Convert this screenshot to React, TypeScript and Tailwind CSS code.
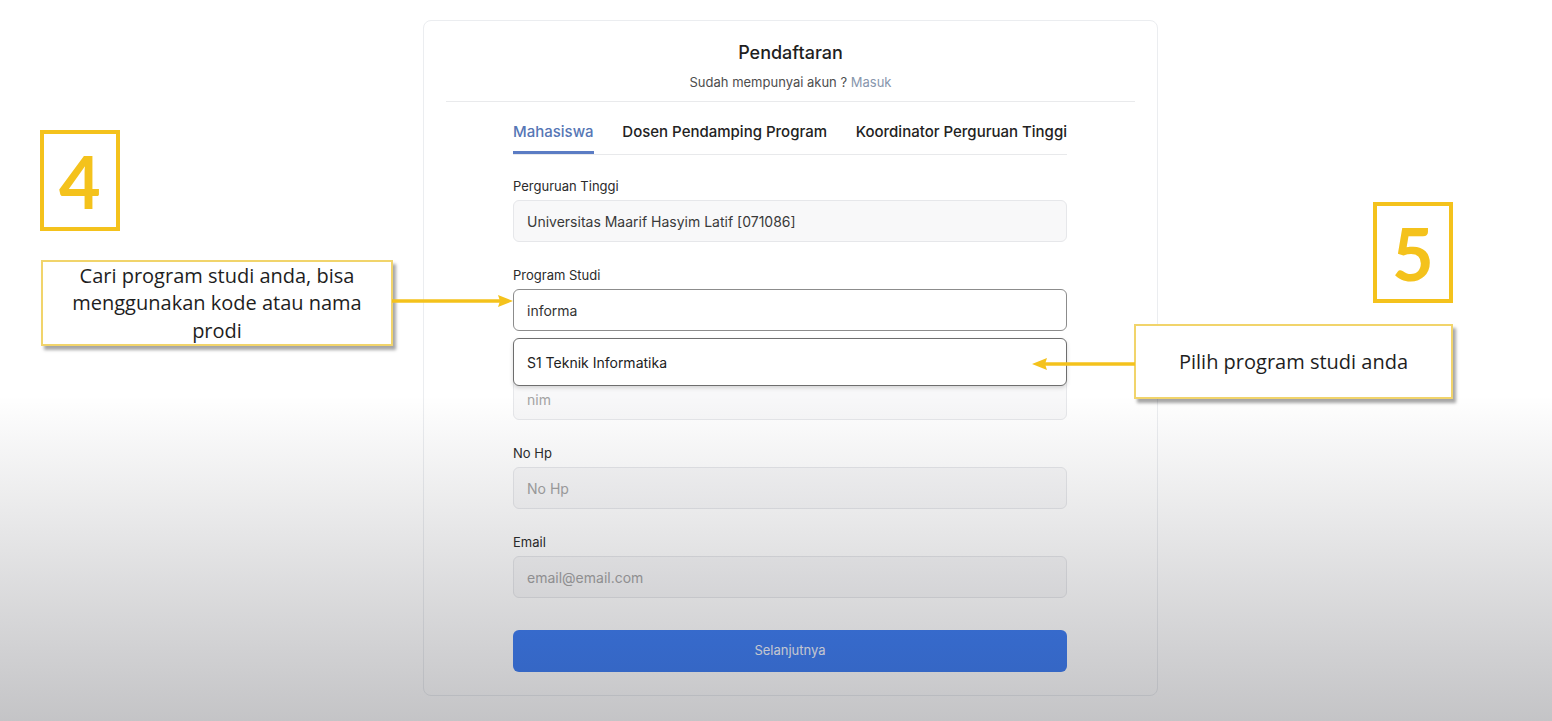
const font = { fontFamily: "Inter, 'Noto Sans', sans-serif" }
const callFont = { fontFamily: "'Open Sans', Lato, sans-serif" }
const digitFont = { fontFamily: "Lato, 'Open Sans', sans-serif" }

interface FieldProps {
  label: string
  value?: string
  placeholder?: string
  active?: boolean
  hideLabel?: boolean
  children?: React.ReactNode
}

const Field: React.FC<FieldProps> = ({ label, value, placeholder, active, hideLabel, children }) => {
  return (
    <div className="relative flex flex-col">
      <label className={`text-[13px] leading-[18px] text-[#2b2b2b] mb-[5px] ${hideLabel ? "invisible" : ""}`}>{label}</label>
      <div
        className={
          active
            ? "h-[42px] flex items-center px-[13px] rounded-md border border-[#8c8c8c] bg-white text-[14px] text-[#333]"
            : "h-[42px] flex items-center px-[13px] rounded-md border border-[#e6e7ea] bg-[#f8f8f9] text-[14px] text-[#3a3a3a]"
        }
      >
        {value ? <span>{value}</span> : <span className="text-[#a3a3a3]">{placeholder}</span>}
      </div>
      {children}
    </div>
  )
}

const Callout: React.FC<{ className: string; children: React.ReactNode }> = ({ className, children }) => (
  <div
    className={`absolute z-20 bg-white border-2 border-[#f1d46b] shadow-[3px_4px_3px_rgba(0,0,0,0.35)] flex items-center justify-center text-center text-[#1e1e1e] ${className}`}
    style={callFont}
  >
    {children}
  </div>
)

const StepBox: React.FC<{ n: string; className: string }> = ({ n, className }) => (
  <div
    className={`absolute z-20 w-[80px] h-[101px] border-[4px] border-[#f4c21c] flex items-center justify-center text-[72px] font-bold text-[#f4c21c] leading-none ${className}`}
    style={digitFont}
  >
    {n}
  </div>
)

export default function App() {
  return (
    <div className="relative w-full h-[721px] overflow-hidden bg-white" style={font}>
      {/* form card */}
      <div className="ml-[423px] mt-[20px] w-[735px] rounded-lg border border-[#ebedf0] bg-white pt-[18px] pb-[23px]">
        <div className="flex flex-col items-center">
          <h1 className="text-[18px] leading-[28px] font-medium text-[#1f1f1f]">Pendaftaran</h1>
          <p className="mt-[5px] text-[13px] leading-[20px] text-[#4d4d4d]">
            Sudah mempunyai akun ? <span className="text-[#8796ad]">Masuk</span>
          </p>
        </div>
        <div className="mx-[22px] mt-[9px] border-t border-[#e9eaec]" />

        <div className="ml-[89px] mr-[90px]">
          <div className="mt-[20px] flex justify-between border-b border-[#e8e9eb] text-[15px] leading-[20px] font-medium">
            <div className="pb-[9px] border-b-[3px] border-[#5b7cc4] text-[#5676b5]">Mahasiswa</div>
            <div className="pb-[12px] text-[#222]">Dosen Pendamping Program</div>
            <div className="pb-[12px] text-[#222]">Koordinator Perguruan Tinggi</div>
          </div>

          <div className="mt-[22px] flex flex-col gap-[24px]">
            <Field label="Perguruan Tinggi" value="Universitas Maarif Hasyim Latif [071086]" />
            <Field label="Program Studi" value="informa" active>
              <div className="absolute left-0 right-0 top-[72px] z-10 h-[48px] flex items-center px-[13px] rounded-md border border-[#6e6e6e] bg-white shadow-[0_2px_4px_rgba(0,0,0,0.15)] text-[14px] text-[#222]">
                S1 Teknik Informatika
              </div>
            </Field>
            <Field label="NIM" placeholder="nim" hideLabel />
            <Field label="No Hp" placeholder="No Hp" />
            <Field label="Email" placeholder="email@email.com" />
          </div>

          <button className="mt-[32px] w-full h-[42px] rounded-md bg-[#3e7df2] text-[13px] text-[#eef2fb]">
            Selanjutnya
          </button>
        </div>
      </div>

      {/* video fade */}
      <div className="pointer-events-none absolute z-10 left-0 right-0 top-[395px] bottom-0 bg-gradient-to-b from-transparent to-[rgba(20,20,30,0.25)]" />

      {/* annotations */}
      <StepBox n="4" className="left-[40px] top-[130px]" />
      <StepBox n="5" className="left-[1373px] top-[202px]" />

      <Callout className="left-[41px] top-[260px] w-[352px] h-[86px] text-[20px] leading-[27.5px]">
        <span>
          Cari program studi anda, bisa
          <br />
          menggunakan kode atau nama
          <br />
          prodi
        </span>
      </Callout>
      <Callout className="left-[1134px] top-[324px] w-[319px] h-[75px] text-[20px]">
        Pilih program studi anda
      </Callout>

      <svg className="absolute z-20 left-[392px] top-[292px]" width="124" height="18" viewBox="0 0 124 18">
        <line x1="0" y1="9" x2="110" y2="9" stroke="#f4c21c" strokeWidth="3.5" />
        <polygon points="121,9 106,3 108,9 106,15" fill="#f4c21c" />
      </svg>
      <svg className="absolute z-20 left-[1029px] top-[355px]" width="106" height="18" viewBox="0 0 106 18">
        <line x1="14" y1="9" x2="106" y2="9" stroke="#f4c21c" strokeWidth="3.5" />
        <polygon points="3,9 18,3 16,9 18,15" fill="#f4c21c" />
      </svg>
    </div>
  )
}
